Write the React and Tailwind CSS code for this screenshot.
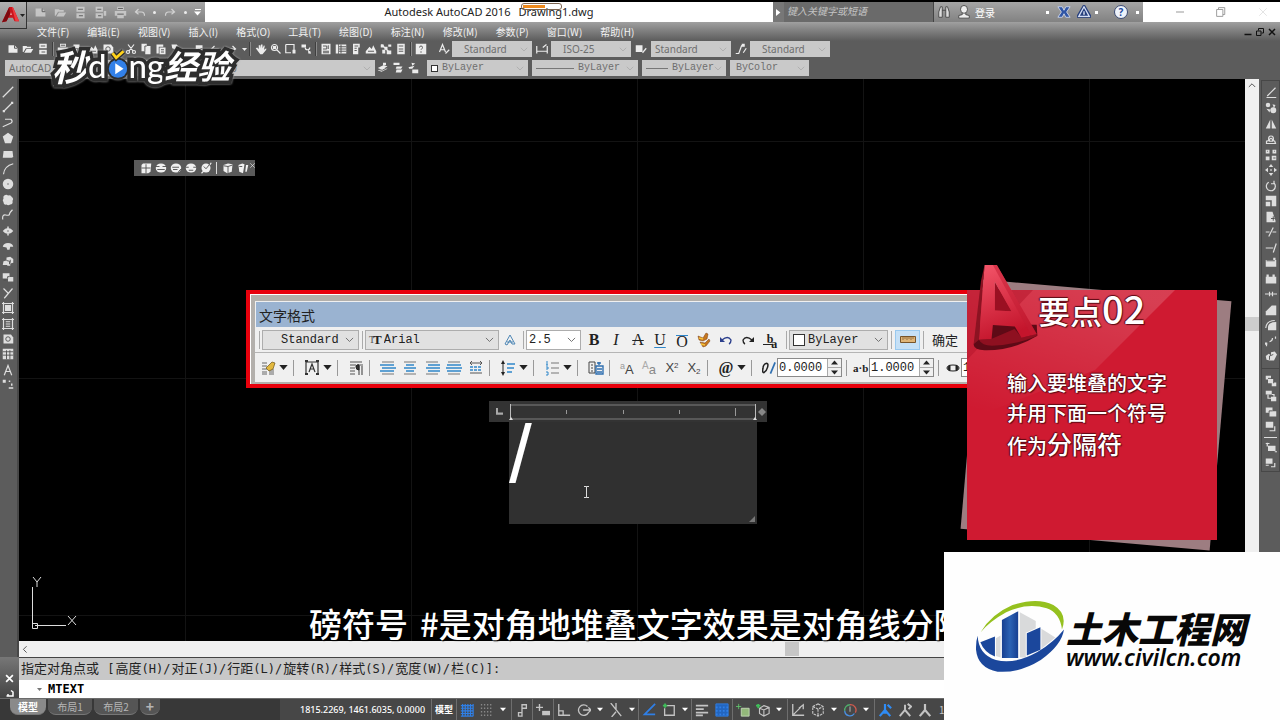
import { useState } from "react";
import clsx from "clsx";

// l = light strokes, f = light fill, d = dark detail
const shapes = {
  newFile: { f: "M2 3h8l4 4v6H2z", d: "M10 3v4h4" },
  open: { f: "M1 4h5l1 1h5v2H5l-3 5H1zM6 8h9l-3 5H3z" },
  save: { f: "M3 1h10v6H3zM3 9h10v6H3z", d: "M5 4h6M6 12h5" },
  saveAs: { f: "M2 1h9v6H2zM2 9h9v6H2zM12 6h3v6h-3z", d: "M4 4h5M5 12h4" },
  print: { f: "M4 1h8v4H4zM1 6h14v6h-3v3H4v-3H1z", d: "M4 10h8M5 3h6" },
  undo: { l: "M6 4 2 8l4 3M3 8h7q4 0 4 5" },
  redo: { l: "M10 4l4 4-4 3M13 8H6q-4 0-4 5" },
  preview: { f: "M2 2h8v5H2zM2 8h5v6H2z", l: "M9 10a2.5 2.5 0 1 0 5 0 2.5 2.5 0 1 0-5 0M13 12l2 3" },
  cut: { l: "M4 2l7 9M12 2 5 11M2 12a2 2 0 1 0 4 0 2 2 0 1 0-4 0M10 12a2 2 0 1 0 4 0 2 2 0 1 0-4 0" },
  copy: { f: "M2 1h7v10H2zM7 4h7v11H7z", d: "M6.500 11V4H9" },
  paste: { f: "M2 2h9v3H5v9H2zM6 6h8v9H6z", d: "M8 9h4M8 12h4" },
  match: { f: "M2 2h7l3 4-4 3-5-2zM9 10l3-2 3 5-2 2z" },
  hand: { f: "M1 7l2-1 2 2V3h2v4l1-5h2l0 5 2-4 1 1-1 5 3-2v2l-5 6H7z" },
  zoom: { l: "M2 6a4 4 0 1 0 8 0 4 4 0 1 0-8 0M9 9l5 5", f: "M4 4h4v4H4z" },
  zoomWin: { l: "M1 2h11v8M1 2v11h7", f: "M10 9h4v5h-4z" },
  zoomPrev: { f: "M2 2h6v4H2zM11 11h3v3h-3z", l: "M7 6a3 3 0 1 0 6 0M11 10l3 4" },
  props: { f: "M2 1h12v14H2z", d: "M4 4h5v4H4M11 3v5M4 11h8M4 13h8" },
  design: { f: "M1 2h3v12H1zM5 2h10v12H5z", d: "M8 2v12M5 5h10M5 8h10M5 11h10" },
  palette: { f: "M4 1h9v5h-2v9H4z", d: "M6 4h5M6 7h3M6 10h3" },
  sheet: { f: "M1 11l5-6 3 3 2-5 4 8v3H1z", d: "M4 11h8" },
  markup: { f: "M1 2h4v4H1zM6 5h4v4H6zM11 2h4v3h-4zM3 9h4v5H3zM9 10h6v5H9z", l: "M2 2l11 11" },
  calc: { f: "M3 1h10v14H3z", d: "M5 4h6M5 8h6M5 11h6" },
  help: { f: "M1 1h14v14H1z", d: "M6 6q0-2 2-2t2 2q0 1-2 3M8 11v2" },
  textStyle: { l: "M2 12 6 2l4 10M3 9h6M10 14l5-5" },
  dimStyle: { l: "M1 4v10M15 4v10M1 11h14M9 6l5-4" },
  tableStyle: { f: "M1 3h9v9H1z", l: "M10 13l5-6" },
  leaderStyle: { l: "M1 14h4L9 3M11 13l4-6", f: "M9 1h4v4H9z" },
  layer: { f: "M1 8l8-4 5 2-8 4zM1 11l8-4 5 2-8 4zM8 1h4v3H8z", d: "M2 10l5 1 6-3" },
  layerPrev: { f: "M2 1h8v3H2zM6 6h8l-2 3H5zM6 10h8l-2 4H5z" },
  layerState: { f: "M6 1l5 1-4 3zM2 7l8-2-3 4H3zM7 10h8v5H7z" },
  line: { l: "M1 15 15 1" },
  xline: { l: "M3 13 13 3", f: "M1 12h3v3H1zM12 1h3v3h-3z" },
  pline: { l: "M4 3h8q3 3 0 5L1 13" },
  polygon: { f: "M8 1l7 5-3 9H4L1 6z" },
  rect: { f: "M2 4h12l1 8-2 1H1l1-8z" },
  arc: { l: "M2 15Q3 4 15 1" },
  circle: { f: "M1 8a7 7 0 1 0 14 0 7 7 0 1 0-14 0", d: "M8 7v2" },
  cloud: { f: "M3 2q3-2 5 0 4-1 5 2 3 2 1 5 1 5-3 5-3 2-5 0-4 1-4-3-2-3 0-5-1-3 1-4" },
  spline: { l: "M1 14Q0 7 5 8t5-1 4-6" },
  ellipse: { f: "M1 8q3-4 7-4t7 4q-3 4-7 4T1 8M7 2h2v12H7z", d: "M7 8h2" },
  ellipseArc: { f: "M1 9q1-5 7-5t7 5l-4 0-1 4H7l-1-3z" },
  insert: { f: "M2 7l4-1V2l5-1 4 3v5l-4 1v3H7v-1H1z", d: "M6 6l4 1v4M11 5v4" },
  block: { f: "M1 3h9v7H1zM8 8h7v6H8z", d: "M7.500 10V7.500H10M2 12h4" },
  point: { l: "M2 2l6 6M14 2 3 15" },
  hatch: { f: "M4 4h8v8H4z", l: "M2 0v16M14 0v16M0 2h16M0 14h16" },
  gradient: { l: "M2 0v16M14 0v16M0 2h16M0 14h16M5 5h6M5 8h6M5 11h6" },
  region: { f: "M2 2h10l3 4v8H2z", d: "M5 8a3 3 0 1 0 6 0 3 3 0 1 0-6 0" },
  table: { f: "M1 1h14v14H1z", d: "M1 5h14M1 9.500h14M6 3v12M10.500 3v12" },
  mtext: { l: "M3 15 8 2l5 13M5 10h6M3 14h1M12 14h1" },
  addSel: { f: "M1 1h4v4H1zM9 2h2v2H9zM12 6h2v3h-2zM9 11h6v2H9z" },
  erase: { l: "M3 12 14 1M2 14h13" },
  copyObj: { f: "M1 4a3 3 0 1 0 6 0 3 3 0 1 0-6 0M2 9l4 5 1-4M7 11a4 4 0 1 0 8 0 4 4 0 1 0-8 0M10 3l4 1-2 4z" },
  mirror: { f: "M7 2v12H1zM9 2v12h6z" },
  offset: { l: "M2 14h12l-1-3-2-1q1-6-3-6T5 10l-3 1zM6 11q0-4 2-4t2 4z" },
  array: { f: "M1 1h5v5H1zM10 1h5v5h-5zM1 10h5v5H1zM9 9h6v6H9z", d: "M3 3h1M12 3h1M11 12h3" },
  move: { f: "M8 0l3 4H5zM8 16l3-4H5zM0 8l4-3v6zM16 8l-4-3v6zM7 7h2v2H7z" },
  rotate: { l: "M5 3a6 6 0 1 0 7 1M12 1v4H8" },
  scale: { f: "M1 1h14v14H9V7H1zM1 9h6v6H1z" },
  stretch: { f: "M2 1h8l4 12v2H2z", d: "M8 10h5M11 7v6" },
  trim: { l: "M1 8h5M10 8h5M5 14 11 2" },
  extend: { l: "M1 8h10M11 14l4-12" },
  breakPt: { f: "M1 4h14v9H1zM11 1h3v3h-3z", d: "M2 5h11" },
  breakAt: { f: "M1 5h14v9H1zM2 2h3v3H2zM10 2h3v3h-3z" },
  join: { l: "M0 8h5M11 8h5M6 5v6M10 5v6M6 8h4" },
  chamfer: { f: "M1 15V10L9 2h6v13z" },
  fillet: { f: "M4 15V10Q5 4 15 4v11z", l: "M1 12Q2 2 13 2" },
  blend: { l: "M2 11v4M6 9q4-1 4-5M14 2v3", f: "M0 10h3v3H0z" },
  explode: { f: "M1 8l4-3 3 2V3l5-1 3 4-2 4-2 4H6l-4-1z", d: "M6 13V8l5-2" },
  front: { f: "M1 1h7v5H1zM4 5h8v6H4zM9 10h6v5H9z", d: "M4 4.500h7.500V11" },
  back: { f: "M1 1h8v5H1zM8 9h7v6H8z", l: "M4 6v5h4M9 6h3v3" },
  above: { f: "M1 2h9v7H1zM6 7h9v7H6z", d: "M5.500 9V6.500H10" },
  under: { f: "M1 1h10v8H1z", l: "M13 7v6H6" },
  textFront: { f: "M4 5h10v7H4z", l: "M1 2h5M3 1v5M13 13h3" },
  hatchBack: { f: "M1 2h9v7H1z", l: "M13 8v5H8M1 11h4" },
  cube: { f: "M2 4l2-2h11l-1 11-3 2H2z", d: "M2 8h12M8 3v12" },
  sphere: { f: "M1 8a7 6 0 1 0 14 0 7 6 0 1 0-14 0", d: "M1 6h5M10 6h5M3 10h10" },
  sphereCut: { f: "M1 8a7 6 0 1 0 14 0 7 6 0 1 0-14 0", d: "M3 7h9M4 10h6M11 13l4-4" },
  sphereSlice: { f: "M1 8a7 6 0 1 0 14 0 7 6 0 1 0-14 0", d: "M1 7h4M11 7h4M5 11h6" },
  sphereLine: { f: "M2 8a6 6 0 1 0 12 0 6 6 0 1 0-12 0", d: "M5 6l3 3 5-6", l: "M2 15l3-3M13 4l2-3" },
  box: { f: "M2 4l6-2 6 1-1 10-6 2-5-3z", d: "M2 5l6 1 6-2M8 6v9" },
  boxCut: { f: "M2 4l5-2 3 1-2 12-5-2zM12 4h3l-2 9h-2z", d: "M3 6h4" },
};

const Glyph = ({ name, className = "size-3" }) => {
  const s = shapes[name];
  return (
    <svg viewBox="0 0 16 16" className={clsx("shrink-0", className)} aria-hidden="true">
      {s.f && <path d={s.f} fill="currentColor" />}
      {s.l && <path d={s.l} fill="none" stroke="currentColor" strokeWidth="1.600" />}
      {s.d && <path d={s.d} fill="none" stroke="#4f4f4f" strokeWidth="1.200" />}
    </svg>
  );
};

const Svg = ({ children, className = "size-4" }) => (
  <svg viewBox="0 0 16 16" className={clsx("shrink-0", className)} fill="none" stroke="currentColor" aria-hidden="true">
    {children}
  </svg>
);

const Chevron = ({ className }) => (
  <svg viewBox="0 0 10 6" className={clsx("shrink-0", className)} fill="none" stroke="currentColor" aria-hidden="true">
    <path d="M1 1l4 4 4-4" />
  </svg>
);

const Caret = ({ className = "w-[9px]" }) => (
  <svg viewBox="0 0 10 6" className={clsx("h-[5px] shrink-0", className)} fill="currentColor" aria-hidden="true">
    <path d="M0 0h10L5 6z" />
  </svg>
);

const ToolGroup = ({ names, className }) => (
  <div className={clsx("flex", className)}>
    {names.map((n) => (
      <button key={n} type="button" aria-label={n} className="flex w-[15px] items-center justify-center">
        <Glyph name={n} />
      </button>
    ))}
  </div>
);

const BarSep = () => <span className="mx-0.5 h-3.5 w-px bg-[#3f3f3f] shadow-[1px_0_0_#8a8a8a]" />;

const BarCombo = ({ label, value, className, textClass, children }) => (
  <div className={clsx("flex h-4 shrink-0 items-center bg-[#c9c9c9] px-1 text-[#6e6e6e]", className)}>
    {children}
    <select aria-label={label} className={clsx("h-4 min-w-0 flex-1 appearance-none bg-transparent leading-4 outline-none", textClass)}>
      <option>{value}</option>
    </select>
    <Chevron className="w-2 text-[#aaa]" />
  </div>
);

const sansText = "font-['Noto_Sans',sans-serif] text-[10px]";
const monoText = "font-['Liberation_Mono',monospace] text-[10px]";

/* ---------- title bar ---------- */
const TitleBar = () => (
  <header className="relative flex h-5 shrink-0 bg-gradient-to-b from-[#a5a5a5] to-[#828282] text-[#d2d2d2]">
    <button
      type="button"
      aria-label="Application menu"
      className="absolute top-0 left-0 z-10 flex h-[27px] w-[27px] items-center border-r border-b border-[#333] bg-gradient-to-b from-[#b0b0b0] to-[#8b8b8b] text-[#222]"
    >
      <svg viewBox="0 0 20 20" className="ml-0.5 size-[18px]">
        <path d="M8 1h4l7 16h-5l-2-4-5 0-2 4-5 1z" fill="#c8161d" />
        <path d="M8 1 0 18l5-1 4-8z" fill="#7d0a10" />
        <path d="M10 7l1 3H9z" fill="#efb5b5" />
        <path d="M11 1h1l7 16h-4z" fill="#ef3a3f" />
      </svg>
      <Caret className="w-[5px]" />
    </button>
    <div className="flex w-[205px] shrink-0 items-center pl-[30px]">
      {["newFile", "open", "save", "saveAs", "print"].map((n) => (
        <button key={n} type="button" aria-label={n} className="flex w-5 justify-center">
          <Glyph name={n} className="size-[13px] opacity-80" />
        </button>
      ))}
      <button type="button" aria-label="undo" className="ml-1"><Glyph name="undo" /></button>
      <span className="ml-[7px] size-[3px] rounded-full bg-[#ececec]" />
      <button type="button" aria-label="redo" className="ml-2"><Glyph name="redo" /></button>
      <span className="ml-2 size-[3px] rounded-full bg-[#ececec]" />
      <button type="button" aria-label="Customize" className="ml-[7px] flex flex-col items-center gap-px text-white">
        <span className="h-px w-1.5 bg-white" />
        <Caret className="w-[7px]" />
      </button>
    </div>
    <div className="relative flex flex-1 items-center justify-center bg-white font-['Noto_Sans',sans-serif] text-[11px] text-[#222]">
      <h1 className="flex gap-2 whitespace-pre">
        <span>Autodesk AutoCAD 2016</span>
        <span>Drawing1.dwg</span>
      </h1>
      <div className="absolute top-px left-[316px] flex h-[7px] w-[41px] rounded-[3px] border border-[#7c6450] p-px">
        <span className="w-[22px] bg-[#ef8a1d]" />
      </div>
    </div>
    <button type="button" aria-label="Expand search" className="flex w-[11px] items-center justify-center bg-[#777]">
      <svg viewBox="0 0 5 8" className="h-[7px]"><path d="M0 0l5 4-5 4z" fill="#fff" /></svg>
    </button>
    <input
      aria-label="Search"
      placeholder="键入关键字或短语"
      className="w-[149px] bg-[#6a6a6a] px-[3px] pb-1 font-['Noto_Sans_CJK_SC',sans-serif] text-[10px] italic outline-none placeholder:text-[#c4c4c4]"
    />
    <div className="flex w-[210px] items-center border-l border-[#444] pl-[3px] text-white">
      <Svg className="size-[14px]"><path d="M2 14V8l2-6h2v12zM10 14V2h2l2 6v6zM6 6h4" fill="#ddd" stroke="#444" /></Svg>
      <Svg className="ml-1.5 size-[14px]">
        <path d="M4 5a4 4.500 0 1 0 8 0 4 4.500 0 1 0-8 0M6 9v2l-4 1v3h12v-3l-4-1V9" fill="#eee" stroke="#444" />
      </Svg>
      <a href="#login" className="ml-1 font-['Noto_Sans_CJK_SC',sans-serif] text-[10px]">登录</a>
      <span className="ml-[51px] size-[3px] bg-white" />
      <Svg className="ml-2 size-[14px]">
        <path d="M1 2h5l2 4 2-4h5l-4 6 4 6h-5l-2-4-2 4H1l4-6z" fill="#2f55a5" stroke="#cfd8ee" />
      </Svg>
      <Svg className="ml-1.5 size-[14px]">
        <path d="M8 1 1 13h14zM8 6l-4 6h8z" stroke="#263f7d" strokeWidth="3" />
        <path d="M8 2 2 13h12zM8 7v4" stroke="#d5def5" strokeWidth="1.500" />
      </Svg>
      <span className="ml-1 size-[3px] bg-white" />
      <span className="ml-4 flex size-[14px] items-center justify-center rounded-full border border-[#3c4b73] bg-[#eef3fb] font-['Noto_Sans',sans-serif] text-[10px] font-bold text-[#24499e]">?</span>
      <span className="ml-2 size-[3px] bg-white" />
    </div>
    <div className="flex w-[137px] items-center justify-between bg-white pr-3 pl-[33px] text-[#999]">
      <button type="button" aria-label="Minimize"><Svg className="size-2"><path d="M0 8h16" strokeWidth="2" /></Svg></button>
      <button type="button" aria-label="Restore"><Svg className="size-2.5"><path d="M1 4h10v11H1zM4 4V1h10v11h-3" strokeWidth="1.500" /></Svg></button>
      <button type="button" aria-label="Close" className="text-[#e2e2e2]"><Svg className="size-2.5"><path d="M2 2l12 12M14 2 2 14" strokeWidth="1.500" /></Svg></button>
    </div>
  </header>
);

const menus = ["文件(F)", "编辑(E)", "视图(V)", "插入(I)", "格式(O)", "工具(T)", "绘图(D)", "标注(N)", "修改(M)", "参数(P)", "窗口(W)", "帮助(H)"];

const MenuBar = () => (
  <nav className="flex h-[19px] shrink-0 items-center bg-gradient-to-b from-[#a0a0a0] to-[#5c5c5c] pr-1 pl-[37px] font-['Noto_Sans_CJK_SC',sans-serif] text-[10px] text-[#f2f2f2]">
    <div className="flex gap-[18px]">
      {menus.map((m) => (
        <button key={m} type="button">{m}</button>
      ))}
    </div>
    <div className="ml-auto flex gap-1 text-[#111]">
      <Svg className="size-2"><path d="M1 13h14" strokeWidth="3" /></Svg>
      <Svg className="size-2"><path d="M1 6h9v9H1zM5 5V1h10v9h-4" strokeWidth="2" /></Svg>
      <Svg className="size-2"><path d="M2 2l12 12M14 2 2 14" strokeWidth="3" /></Svg>
    </div>
  </nav>
);

const Toolbars = () => (
  <div className="shrink-0 bg-[#5c5c5c] text-[#ececec]">
    <div className="flex h-[18px] items-start pl-[5px]">
      <div className="flex h-4 w-[430px] shrink-0 items-center">
        <ToolGroup names={["newFile", "open", "save"]} />
        <BarSep />
        <ToolGroup names={["print", "preview", "sheet", "region"]} />
        <ToolGroup names={["cut", "copy", "paste", "match"]} className="ml-2" />
        <ToolGroup names={["block", "undo", "redo"]} className="ml-2.5" />
        <Caret className="ml-1 w-[5px]" />
        <BarSep />
        <ToolGroup names={["hand", "zoom", "zoomWin", "zoomPrev"]} className="ml-px" />
        <BarSep />
        <ToolGroup names={["props", "design", "palette", "sheet", "markup", "calc"]} />
        <BarSep />
        <ToolGroup names={["help"]} />
      </div>
      <div className="flex h-4 items-center">
        <div className="flex w-[17px] justify-center"><Glyph name="textStyle" /></div>
        <BarCombo label="Text style" value="Standard" className="w-20 pl-3" textClass={sansText} />
        <div className="flex w-[19px] justify-center"><Glyph name="dimStyle" /></div>
        <BarCombo label="Dimension style" value="ISO-25" className="w-20 pl-3" textClass={sansText} />
        <div className="flex w-5 justify-center"><Glyph name="tableStyle" /></div>
        <BarCombo label="Table style" value="Standard" className="w-20" textClass={sansText} />
        <div className="flex w-[19px] justify-center"><Glyph name="leaderStyle" /></div>
        <BarCombo label="Leader style" value="Standard" className="w-20 pl-3" textClass={sansText} />
      </div>
    </div>
    <div className="flex h-5 items-start pt-px pl-[5px]">
      <BarCombo label="Workspace" value="AutoCAD 经典" className="w-[190px]" textClass={sansText} />
      <BarCombo label="Layer" value="0" className="w-[180px] pl-9" textClass={sansText} />
      <div className="flex h-4 items-center">
        <ToolGroup names={["layer", "layerPrev", "layerState"]} />
      </div>
      <BarCombo label="Colour" value="ByLayer" className="ml-[7px] w-[101px]" textClass={monoText}>
        <span className="mr-1 size-[7px] border border-[#333] bg-white" />
      </BarCombo>
      <BarCombo label="Linetype" value="ByLayer" className="ml-1 w-[106px]" textClass={monoText}>
        <span className="mr-1 h-px w-[38px] bg-[#777]" />
      </BarCombo>
      <BarCombo label="Lineweight" value="ByLayer" className="ml-1 w-[84px]" textClass={monoText}>
        <span className="mr-1 h-px w-[22px] bg-[#777]" />
      </BarCombo>
      <BarCombo label="Plot style" value="ByColor" className="ml-1 w-[79px] pl-1.5" textClass={monoText} />
    </div>
  </div>
);

const drawTools = ["line", "xline", "pline", "polygon", "rect", "arc", "circle", "cloud", "spline", "ellipse", "ellipseArc", "insert", "block", "point", "hatch", "gradient", "region", "table", "mtext", "addSel"];
const modifyTools = ["erase", "copyObj", "mirror", "offset", "array", "move", "rotate", "scale", "stretch", "trim", "extend", "breakPt", "breakAt", "join", "chamfer", "fillet", "blend", "explode"];

const ToolColumn = ({ names, className }) => (
  <div className={clsx("flex flex-col", className)}>
    {names.map((n) => (
      <button key={n} type="button" aria-label={n} className="flex flex-1 items-center justify-center">
        <Glyph name={n} />
      </button>
    ))}
  </div>
);

/* ---------- text formatting dialog ---------- */
const Grip = ({ className }) => <span className={clsx("h-[18px] w-px shrink-0 bg-[#aaa]", className)} />;
const Sep = ({ tight }) => (
  <span className={clsx("h-4 w-px shrink-0 bg-[#999]", tight ? "mr-1.5 ml-1" : "mr-2.5 ml-[5px]")} />
);

const FormatCombo = ({ label, value, className, children }) => (
  <div className={clsx("flex h-5 shrink-0 items-center border border-[#adadad] pr-1 text-xs", className)}>
    {children}
    <select aria-label={label} className="min-w-0 flex-1 appearance-none bg-transparent font-['Liberation_Mono',monospace] outline-none">
      <option>{value}</option>
    </select>
    <Chevron className="w-[9px] text-[#666]" />
  </div>
);

const FormatButton = ({ label, children, className }) => (
  <button type="button" aria-label={label} className={clsx("flex w-[22px] shrink-0 justify-center font-['Liberation_Serif',serif] text-base leading-5", className)}>
    {children}
  </button>
);

const MenuButton = ({ label, children }) => (
  <button type="button" aria-label={label} className="flex w-7 shrink-0 items-center gap-[3px]">
    {children}
    <Caret />
  </button>
);

// lines of a paragraph; the inner ones are blue
const AlignIcon = ({ inner }) => (
  <Svg>
    <path d="M2 2h12M2 14h12" stroke="#777" />
    <path d={inner} stroke="#2f86c9" strokeWidth="1.500" />
  </Svg>
);

const NumberField = ({ label, value, onChange, className }) => (
  <div className={clsx("flex h-[19px] shrink-0 items-stretch border border-[#8a8a8a] bg-white", className)}>
    <input
      aria-label={label}
      value={value}
      onChange={(e) => onChange(e.target.value)}
      className="w-0 flex-1 pl-px font-['Liberation_Mono',monospace] text-xs outline-none"
    />
    <div className="flex w-[14px] flex-col items-center justify-around border-l border-[#aaa] bg-[#f0f0f0]">
      <button type="button" aria-label="Increase"><Caret className="w-[7px] rotate-180" /></button>
      <span className="h-px w-full bg-[#aaa]" />
      <button type="button" aria-label="Decrease"><Caret className="w-[7px]" /></button>
    </div>
  </div>
);

const FormatDialog = () => {
  const [oblique, setOblique] = useState("0.0000");
  const [tracking, setTracking] = useState("1.0000");
  const [widthFactor, setWidthFactor] = useState("1.0000");

  return (
    <section className="absolute top-[211px] left-[227px] w-[790px] border-4 border-[#e8000c] bg-[#f0f0f0] text-[#222]">
      <div className="border-t border-l border-white">
        <div className="border-t-[6px] border-b-2 border-l-4 border-[#b3b0ac]">
          <h2 className="mt-px ml-px flex h-[25px] items-center bg-[#9ab3d1] pl-[3px] font-['Noto_Sans_CJK_SC',sans-serif] text-sm">文字格式</h2>
          <div className="flex h-[26px] items-center border-b border-[#b5b5b5] pl-1">
            <Grip />
            <FormatCombo label="Style" value="Standard" className="ml-0.5 w-[97px] bg-[#e1e1e1] pl-[18px]" />
            <Grip className="ml-[3px]" />
            <FormatCombo label="Font" value="Arial" className="ml-0.5 w-[134px] bg-[#e1e1e1] pl-[3px]">
              <span className="mr-0.5 flex font-['Liberation_Serif',serif] text-[13px] leading-3"><span className="text-[10px] text-[#555]">T</span><b className="-ml-0.5">T</b></span>
            </FormatCombo>
            <Svg className="ml-[3px] size-4"><path d="M3 12 8 3l5 9h-3L8 8l-3 5zM5 10h6" stroke="#4d86b5" /></Svg>
            <Grip className="ml-[5px]" />
            <FormatCombo label="Text height" value="2.5" className="mr-0.5 ml-0.5 w-[55px] bg-white pl-0.5" />
            <FormatButton label="Bold"><b>B</b></FormatButton>
            <FormatButton label="Italic"><i>I</i></FormatButton>
            <FormatButton label="Strikethrough"><span className="line-through">A</span></FormatButton>
            <FormatButton label="Underline"><span className="underline decoration-[#2f86c9] underline-offset-2">U</span></FormatButton>
            <FormatButton label="Overline"><span className="mt-1 border-t border-[#2f86c9] leading-3">O</span></FormatButton>
            <FormatButton label="Match formatting">
              <Svg>
                <path d="M2 4l5 2 3-5 2 1-1 5-4 2-4-1zM4 10l5 1 4-4 1 2-4 5-3 1z" fill="#c4761f" stroke="#7a3f12" strokeWidth=".500" />
                <path d="M3 6l4 1M5 12l4 1" stroke="#f3c23a" strokeWidth="1.500" />
              </Svg>
            </FormatButton>
            <FormatButton label="Undo">
              <Svg><path d="M4 8q6-5 9 0 0 3-2 4" stroke="#2b3f8c" strokeWidth="1.400" /><path d="M2 5v5h5z" fill="#2b3f8c" stroke="none" /></Svg>
            </FormatButton>
            <FormatButton label="Redo">
              <Svg><path d="M12 8q-6-5-9 0 0 3 2 4" stroke="#222" strokeWidth="1.400" /><path d="M14 5v5H9z" fill="#222" stroke="none" /></Svg>
            </FormatButton>
            <FormatButton label="Stack">
              <span className="flex items-center text-xs leading-3 font-bold"><span className="border-b border-[#222] pl-1 leading-[9px]">b</span><span className="mt-2.5 -ml-0.5 leading-[9px]">a</span></span>
            </FormatButton>
            <Grip className="ml-[5px]" />
            <FormatCombo label="Text colour" value="ByLayer" className="ml-0.5 w-[99px] bg-[#e1e1e1] pl-[3px]">
              <span className="mr-[3px] size-3 border border-[#333] bg-white" />
            </FormatCombo>
            <Grip className="ml-[3px]" />
            <button type="button" aria-label="Ruler" className="ml-[3px] flex h-5 w-[25px] items-center justify-center border border-[#99c9ef] bg-[#c5e0f6]">
              <svg viewBox="0 0 16 7" className="w-4"><path d="M.5.5h15v6H.5z" fill="#dfb578" stroke="#77552b" /><path d="M3 1v3M5 1v2M7 1v3M9 1v2M11 1v3M13 1v2" stroke="#77552b" strokeWidth=".700" /></svg>
            </button>
            <Grip className="ml-[3px]" />
            <button type="button" className="ml-2 shrink-0 font-['Noto_Sans_CJK_SC',sans-serif] text-[13px] leading-4">确定</button>
          </div>
          <div className="flex h-[29px] items-center pl-[5px]">
            <MenuButton label="Columns">
              <Svg><path d="M2 3h5M2 6h5M2 9h5M2 12h5M2 14h5M9 12h5M9 14h5M9 10h5" stroke="#666" /><path d="M6 8l6-6 3 1-2 6-4 2z" fill="#e3b93f" stroke="#6d5516" strokeWidth=".700" /></Svg>
            </MenuButton>
            <Sep />
            <MenuButton label="MText justification">
              <Svg><path d="M2 2h12M2 1v13M14 1v13M5 12l3-8 3 8M6 9h4" stroke="#333" strokeWidth="1.200" /><path d="M1 1h3M12 1h3M1 14h3M12 14h3" stroke="#333" strokeWidth="2" /></Svg>
            </MenuButton>
            <Sep />
            <button type="button" aria-label="Paragraph">
              <Svg><path d="M2 2h12M2 5h6M2 8h5M2 11h5M2 14h5M11 6v9M14 6v9M10 5h5" stroke="#555" strokeWidth="1.200" /><path d="M8 7a2 2 0 0 1 3-2v5q-3 0-3-3" fill="#333" /></Svg>
            </button>
            <Sep />
            <div className="flex shrink-0 gap-1.5">
              <button type="button" aria-label="Left"><AlignIcon inner="M0 5h14M2 8h14M0 11h14" /></button>
              <button type="button" aria-label="Center"><AlignIcon inner="M4 5h8M2 8h12M4 11h8" /></button>
              <button type="button" aria-label="Right"><AlignIcon inner="M4 5h12M2 8h14M4 11h12" /></button>
              <button type="button" aria-label="Justify"><AlignIcon inner="M1 5h14M0 8h16M1 11h14" /></button>
              <button type="button" aria-label="Distribute">
                <Svg><path d="M2 3h12M4 1 2 3l2 2M12 1l2 2-2 2M2 13h12" stroke="#555" /><path d="M2 7h12M2 10h12" stroke="#2f86c9" strokeWidth="1.500" strokeDasharray="3 1" /></Svg>
              </button>
            </div>
            <Sep />
            <MenuButton label="Line spacing">
              <Svg><path d="M3 3v10" stroke="#222" /><path d="M3 0l2 4H1zM3 16l2-4H1z" fill="#222" stroke="none" /><path d="M7 4h8M7 8h7M7 12h5" stroke="#2f86c9" strokeWidth="1.500" /></Svg>
            </MenuButton>
            <Sep />
            <MenuButton label="Numbering">
              <Svg><path d="M3 1v4M2 5h2M2 7h2v2H2M2 12h2v3H2" stroke="#2f86c9" /><path d="M7 3h8M7 8h8M7 13h8" stroke="#777" /></Svg>
            </MenuButton>
            <Sep />
            <button type="button" aria-label="Insert field">
              <Svg><path d="M1 2h6v11H1zM3 5h2M3 8h2M3 11h2" stroke="#444" /><path d="M8 6h7v8H8zM9 9h5M9 12h5M11 2v3M9 3h4" stroke="#2f6fb0" strokeWidth="1.400" /></Svg>
            </button>
            <Sep />
            <div className="flex shrink-0 gap-1.5 font-['Liberation_Sans',sans-serif] text-[13px] leading-4 text-[#444]">
              <button type="button" aria-label="Uppercase" className="flex w-4 items-end"><span className="mb-1 text-[9px] text-[#999]">a</span>A</button>
              <button type="button" aria-label="Lowercase" className="flex w-4 items-end text-[#888]"><span className="mb-1 text-[10px] text-[#aaa]">A</span>a</button>
              <button type="button" aria-label="Superscript" className="w-4">X<sup className="text-[8px]">2</sup></button>
              <button type="button" aria-label="Subscript" className="w-4">X<sub className="text-[8px]">2</sub></button>
            </div>
            <Sep />
            <MenuButton label="Symbol"><span className="w-4 font-['Liberation_Serif',serif] text-base leading-4 font-bold">@</span></MenuButton>
            <Sep />
            <Svg className="h-4 w-[15px]"><path d="M1 9q0-5 4-6 2 0 1 4t-4 6q-2 0-1-4" strokeWidth="1.600" /><path d="M9 14 14 2" stroke="#2f6fb0" strokeWidth="1.800" /></Svg>
            <NumberField label="Oblique angle" value={oblique} onChange={setOblique} className="w-[65px]" />
            <Sep tight />
            <span className="w-4 shrink-0 font-['Liberation_Serif',serif] text-[11px] leading-4 font-bold whitespace-nowrap">a·b</span>
            <NumberField label="Tracking" value={tracking} onChange={setTracking} className="w-[65px]" />
            <Sep tight />
            <Svg><path d="M2 8q0-3 6-3t6 3-6 3-6-3" strokeWidth="1" /><path d="M3 8q0-2 2-3v6q-2-1-2-3M13 8q0-2-2-3v6q2-1 2-3" fill="#222" /></Svg>
            <NumberField label="Width factor" value={widthFactor} onChange={setWidthFactor} className="w-16" />
          </div>
        </div>
      </div>
    </section>
  );
};

const TextEditor = () => (
  <div className="absolute top-[322px] left-[470px] w-[278px]">
    <div className="flex h-[21px] items-center bg-[#333] text-[#aaa]">
      <div className="flex w-5 justify-center">
        <svg viewBox="0 0 8 8" className="size-[7px]"><path d="M1 0v6.500h7" fill="none" stroke="currentColor" strokeWidth="2.500" /></svg>
      </div>
      <svg viewBox="0 0 248 18" className="h-[18px] flex-1" preserveAspectRatio="none">
        <path d="M1 2h246M1 16h246" stroke="#666" strokeWidth="1.500" />
        <path d="M1.500 1v16M246.500 1v16" stroke="#bbb" />
        <path d="M57.500 7v4M114.500 7v4M170.500 7v4M226.500 5v8" stroke="#999" />
        <path d="M0 17l2-3 2 3zM244 17l2-3 2 3z" fill="#ddd" />
      </svg>
      <svg viewBox="0 0 10 10" className="mx-px size-2"><path d="M5 0l5 5-5 5-5-5z" fill="#888" /></svg>
    </div>
    <div className="relative mr-[10px] ml-5">
      <textarea
        aria-label="Multiline text"
        defaultValue="/"
        className="block h-[102px] w-full resize-none overflow-hidden bg-[#303030] font-['Liberation_Sans',sans-serif] text-[82px] leading-[64px] text-white outline-none"
      />
      <svg viewBox="0 0 8 8" className="absolute right-0.5 bottom-0.5 size-1.5"><path d="M8 0v8H0z" fill="#777" /></svg>
      <svg viewBox="0 0 7 12" className="absolute top-[64px] left-[74px] h-3 w-[7px]"><path d="M1 .5h2.500v11H1M6 .5H3.500M6 11.500H3.500" fill="none" stroke="#ddd" /></svg>
    </div>
  </div>
);

const noteText = "[text-shadow:1px_1px_1px_#5b0a14,-1px_0_1px_#5b0a14,0_-1px_1px_#5b0a14]";

const Note = () => (
  <aside className="absolute top-[211px] left-[948px] size-[250px] font-['Noto_Sans_CJK_SC',sans-serif] font-medium text-white">
    <div className="absolute inset-y-0 -right-1 left-1 rotate-[5deg] bg-[#9d7d81]" />
    <div className="absolute inset-0 bg-[#cf1a31]" />
    <svg viewBox="0 0 250 250" className="absolute inset-0">
      <defs>
        <linearGradient id="sheen" x1=".700" y1="0" x2=".200" y2="1">
          <stop offset="0" stopColor="#fff" stopOpacity=".160" />
          <stop offset="1" stopColor="#fff" stopOpacity="0" />
        </linearGradient>
      </defs>
      <path d="M0 0h208L128 80 0 130z" fill="url(#sheen)" />
      <path d="M0 0h66L0 70z" fill="#b3142a" opacity=".500" />
    </svg>
    <svg viewBox="98 42 200 262" className="absolute -top-[26px] left-[5px] h-[87px] w-[67px]">
      <defs>
        <linearGradient id="face" x1="0" y1="0" x2=".300" y2="1">
          <stop offset="0" stopColor="#f4566a" />
          <stop offset="1" stopColor="#c4152c" />
        </linearGradient>
      </defs>
      <path d="M118 225 292 225 294 258Q220 304 135 302 104 300 102 285z" fill="#5e0a16" />
      <path d="M118 270l37-2 70-30 22 25 45-10v6q-60 26-135 29-30 0-39-18z" fill="#8e1020" />
      <path d="M135 45l-17 225-16 14 22-190z" fill="#8c1322" />
      <path d="M166 96l50 88-50-2z" fill="#9a1022" />
      <path d="M135 45h37l120 208-46 11-20-34-66-4-4 42-38 2zM166 96v86l50 2z" fill="url(#face)" fillRule="evenodd" />
      <path d="M172 45l120 208-16 4L160 45z" fill="#c21b32" opacity=".500" />
    </svg>
    <div className={clsx("relative pl-[71px] text-[32px] leading-9", noteText)}>
      要点<span className="text-[38px] leading-9">02</span>
    </div>
    <p className={clsx("relative mt-10 pl-10 text-xl leading-[30px] whitespace-nowrap", noteText)}>
      输入要堆叠的文字<br />
      并用下面一个符号<br />
      作为<span className="text-[25px]">分隔符</span>
    </p>
  </aside>
);

const Canvas = () => (
  <main className="relative z-10 min-w-0 flex-1 bg-black bg-[linear-gradient(to_right,#131313_1px,transparent_1px),linear-gradient(#131313_1px,transparent_1px)] bg-[size:226px_237px] bg-[position:166px_62px]">
    <div className="absolute top-[81px] left-[115px] flex h-4 w-[121px] items-center bg-[#5a5a5a] pl-1 text-[#f0f0f0]">
      <ToolGroup names={["cube", "sphere", "sphereCut", "sphereSlice", "sphereLine"]} className="shrink-0" />
      <span className="mx-[3px] h-3 w-px shrink-0 bg-[#ddd]" />
      <ToolGroup names={["box", "boxCut"]} className="shrink-0" />
      <button type="button" aria-label="Close" className="mb-1.5"><Svg className="size-[5px]"><path d="M1 1l14 14M15 1 1 15" strokeWidth="2" /></Svg></button>
    </div>

    <svg viewBox="0 0 50 54" className="absolute bottom-2.5 left-2.5 h-[54px] w-[50px]" fill="none" stroke="#ddd">
      <path d="M3.500 46.500h5v5h-5zM3.500 48V10M6 48.500H37" />
      <path d="M4 0l4 5 4-5M8 5v5M39 39l8 9M47 39l-8 9" />
    </svg>

    <FormatDialog />
    <TextEditor />
    <Note />
    <p className="absolute bottom-0 left-[290px] z-10 flex gap-3 font-['Noto_Sans_CJK_SC',sans-serif] text-[33px] leading-9 font-medium whitespace-nowrap text-white [text-shadow:1px_1px_1px_#000]">
      <span>磅符号</span>
      <span>#是对角地堆叠文字效果是对角线分隔</span>
    </p>
  </main>
);

const options = ["高度(H)", "对正(J)", "行距(L)", "旋转(R)", "样式(S)", "宽度(W)", "栏(C)"];

const CommandLine = () => (
  <div className="flex h-[41px] shrink-0 bg-[#5c5c5c] font-['DejaVu_Sans_Mono','Noto_Sans_CJK_SC',monospace] text-xs">
    <div className="flex w-[19px] shrink-0 flex-col items-center justify-end gap-1.5 bg-gradient-to-b from-[#777] to-[#444] pb-px text-white">
      <Svg className="size-[9px]"><path d="M2 2l12 12M14 2 2 14" strokeWidth="3" /></Svg>
      <Svg className="size-2"><path d="M1 14h13V6l-4-3M4 14v-4" strokeWidth="3" /></Svg>
    </div>
    <div className="min-w-0 flex-1">
      <div className="flex h-[23px] items-center gap-px border-t border-[#444] bg-[#c8c8c8] pl-0.5 whitespace-pre text-[#222]">
        <span className="text-[13px]">指定对角点或</span>
        <span> [</span>
        {options.map((o, i) => (
          <span key={o}>
            <span className="text-[13px]">{o.slice(0, -3)}</span>
            {o.slice(-3)}
            {i < options.length - 1 ? "/" : "]:"}
          </span>
        ))}
      </div>
      <div className="flex h-[18px] items-center bg-white pl-[18px] text-[#777]">
        <Caret className="w-[5px]" />
        <input aria-label="Command" defaultValue="MTEXT" className="ml-1.5 flex-1 text-xs font-bold text-black outline-none" />
      </div>
    </div>
  </div>
);

/* ---------- status bar ---------- */
const StatusIcon = ({ children, label, className }) => (
  <button type="button" aria-label={label} className={clsx("flex w-5 shrink-0 justify-center", className)}>
    <Svg className="size-[14px]">{children}</Svg>
  </button>
);
const StatusCaret = () => <span className="flex w-3 shrink-0 justify-center text-white"><Caret className="w-[6px]" /></span>;
const StatusSep = () => <span className="h-full w-px shrink-0 bg-[#6e6e6e]" />;

const StatusBar = () => {
  const [tab, setTab] = useState("模型");

  return (
    <footer className="flex h-[22px] shrink-0 items-center border-t border-[#6b6b6b] bg-[#474747] font-['Noto_Sans_CJK_SC',sans-serif] text-[#c4c4c4]">
      <div className="flex h-full w-[280px] shrink-0 items-start bg-[#383838] pl-2.5 text-[10px] leading-[15px]">
        {["模型", "布局1", "布局2", "+"].map((t) => (
          <button
            key={t}
            type="button"
            onClick={() => setTab(t)}
            className={clsx(
              "mr-0.5 rounded-b-lg border-b border-[#777]",
              t === "模型" ? "w-9" : t === "+" ? "w-5 text-sm leading-[15px] font-bold" : "w-11",
              t === tab ? "bg-[#8a8a8a] font-bold text-white" : "bg-[#555] text-[#b5b5b5]"
            )}
          >
            {t}
          </button>
        ))}
      </div>
      <span className="w-[151px] shrink-0 pl-5 font-['Noto_Sans',sans-serif] text-[9px] font-medium whitespace-nowrap text-white">
        1815.2269, 1461.6035, 0.0000
      </span>
      <StatusSep />
      <button type="button" className="w-6 shrink-0 text-[9px] font-bold text-white">模型</button>
      <StatusSep />
      <StatusIcon label="Grid" className="text-[#2f7fe6]"><path d="M3 1v14M6 1v14M9 1v14M12 1v14M15 1v14M1 3h14M1 6h14M1 9h14M1 12h14M1 15h14" strokeWidth="1.400" /></StatusIcon>
      <StatusIcon label="Snap" className="text-[#888]"><path d="M1 2h14M1 6h14M1 10h14M1 14h14" strokeWidth="1.500" strokeDasharray="1.500 2" /></StatusIcon>
      <StatusCaret />
      <span className="w-0.5" /><StatusSep />
      <StatusIcon label="Infer"><path d="M8 13V2h5v4H8M4 11h4v4H4z" strokeWidth="1.500" /></StatusIcon>
      <StatusSep />
      <StatusIcon label="Dynamic input"><path d="M4 1v8M0 5h8" strokeWidth="1.600" /><path d="M7 9h9v5H7z" fill="currentColor" stroke="none" /></StatusIcon>
      <StatusSep />
      <StatusIcon label="Ortho"><path d="M2 1v13h13M2 9h5v5" strokeWidth="1.500" /></StatusIcon>
      <StatusIcon label="Polar"><path d="M12 4a6 6 0 1 0 1 7M7 8h9M13 5l3 3-3 3" strokeWidth="1.500" /></StatusIcon>
      <StatusCaret />
      <StatusIcon label="Isodraft"><path d="M2 0l12 15M8 0v8M8 10l-5 6" strokeWidth="1.500" /></StatusIcon>
      <StatusCaret />
      <StatusSep />
      <StatusIcon label="Tracking" className="text-[#2f7fe6]"><path d="M15 1 3 13h12" strokeWidth="2" /></StatusIcon>
      <StatusIcon label="Object snap"><path d="M5 3h9v11H3V6" strokeWidth="1.500" /><path d="M1 3h5M3.500.5v5" stroke="#3fc05a" strokeWidth="2" /></StatusIcon>
      <StatusCaret />
      <StatusSep />
      <StatusIcon label="Lineweight"><path d="M1 3h14M1 7h9M1 11h14M1 14h8" strokeWidth="2" /></StatusIcon>
      <StatusIcon label="Transparency" className="text-[#2f7fe6]"><path d="M1 1h14v14H1z" fill="#2365bd" /><path d="M1 5h14M1 9h14M1 13h14" strokeDasharray="2 2" strokeWidth="2" /></StatusIcon>
      <StatusSep />
      <StatusIcon label="Cycling"><path d="M3 1v6M0 4h6" stroke="#5fc06a" /><path d="M6 6h9v9H6z" fill="#93b87a" stroke="#c6d9b8" /></StatusIcon>
      <StatusIcon label="3D snap"><path d="M9 3l6 2v7l-6 3-5-3V6zM4 6l5 2 6-3M9 8v7" strokeWidth="1.300" /><path d="M0 3h5M2.500 1v5" stroke="#3fc05a" strokeWidth="2" /></StatusIcon>
      <StatusCaret />
      <span className="w-0.5" /><StatusSep />
      <StatusIcon label="UCS"><path d="M2 1v13h13M3 13l8-8M9 6l5-4v5" strokeWidth="1.500" /></StatusIcon>
      <StatusIcon label="Filter"><path d="M8 1l6 3v8l-6 3-6-3V4zM2 4l6 3 6-3M8 7v8" strokeWidth="1.300" strokeDasharray="3 1" /></StatusIcon>
      <StatusCaret />
      <StatusIcon label="Gizmo"><path d="M8 2a6 6 0 0 0-6 7" stroke="#4fae6b" strokeWidth="1.500" /><path d="M2 9a6 6 0 0 0 11 3" stroke="#4a8fe0" strokeWidth="1.500" /><path d="M14 11A6 6 0 0 0 8 2" stroke="#d05a4e" strokeWidth="1.500" /><path d="M8 4v6" /></StatusIcon>
      <StatusCaret />
      <span className="w-0.5" /><StatusSep />
      <StatusIcon label="Annotation visibility" className="text-[#2f8cf5]"><path d="M8 1v7L2 15M8 8l6 7M5 11h6M11 2l4 4" strokeWidth="2.500" /></StatusIcon>
      <StatusIcon label="Auto scale"><path d="M8 2v6l-6 7M8 8l6 7M11 1l4 3-3 3" strokeWidth="2.200" /></StatusIcon>
      <StatusIcon label="Annotation scale"><path d="M8 1v7L2 15M8 8l6 7" strokeWidth="2.500" /></StatusIcon>
      <span className="pl-1 text-[10px]">1</span>
    </footer>
  );
};

const MiaodongMark = () => (
  <div className="absolute top-[42px] left-[52px] z-20 flex items-center font-['Noto_Sans_CJK_SC',sans-serif] text-[33px] leading-[46px] font-bold text-white [-webkit-text-stroke:7px_#2d2d2d] [paint-order:stroke_fill] drop-shadow-[0_0_1px_#aaa]">
    <span className="text-4xl leading-[46px] italic">秒</span>
    <span className="font-['Lato',sans-serif] font-medium">d</span>
    <svg viewBox="0 0 24 40" className="h-10 w-[22px]">
      <circle cx="12" cy="24" r="12" fill="#2d2d2d" />
      <circle cx="12" cy="24" r="10" fill="#3280e8" />
      <path d="M9 18l9 6-9 6z" fill="#fff" />
      <path d="M6 7l4 5 8-7" fill="none" stroke="#2d2d2d" strokeWidth="6" />
      <path d="M6 7l4 5 8-7" fill="none" stroke="#ffd21c" strokeWidth="3" />
    </svg>
    <span className="font-['Lato',sans-serif] font-medium">ng</span>
    <span className="italic">经验</span>
  </div>
);

const CivilLogo = () => (
  <div className="absolute right-0 bottom-0 z-30 flex h-[168px] w-[336px] items-center bg-[#fefefe] pl-[30px]">
    <svg viewBox="100 175 275 220" className="h-[73px] w-[92px] shrink-0">
      <defs>
        <linearGradient id="tower">
          <stop offset="0" stopColor="#173f91" />
          <stop offset=".500" stopColor="#2b62b4" />
          <stop offset="1" stopColor="#173f91" />
        </linearGradient>
      </defs>
      <path d="M237 212l48 26v22l-30 14v74h-18zM165 290l14-8v66l-14-4zM302 262l42 26-42 34z" fill="#d9dadb" />
      <path d="M183 235l49-26v141h-49z" fill="url(#tower)" />
      <path d="M118 302l44-17v60q-32-12-44-43zM258 275l41-18v68l-41 17z" fill="#1b479c" />
      <path d="M119 272Q150 218 215 190 290 166 338 190 382 216 364 264 358 214 318 200 260 182 196 212 148 238 119 272z" fill="#95c11f" />
      <path d="M110 283Q112 340 165 356 222 370 290 332 340 302 370 264 364 310 300 356 236 396 170 391 110 380 105 325 104 300 110 283z" fill="#1b479c" />
    </svg>
    <div className="pt-1.5 whitespace-nowrap text-[#080808] italic">
      <div className="font-['Noto_Sans_CJK_SC',sans-serif] text-4xl leading-9 font-black">土木工程网</div>
      <a href="#civilcn" className="block font-['Noto_Sans',sans-serif] text-[23px] leading-6 font-semibold">www.civilcn.com</a>
    </div>
  </div>
);

const App = () => {
  return (
    <div className="relative flex h-screen min-h-[640px] flex-col overflow-hidden bg-black pt-0.5">
      <TitleBar />
      <MenuBar />
      <Toolbars />
      <div className="flex min-h-0 flex-1 bg-[#5c5c5c]">
        <div className="w-[19px] shrink-0 border-r-2 border-[#484848] pt-[5px] pr-0.5 text-[#dedede]">
          <ToolColumn names={drawTools} className="h-[309px]" />
        </div>
        <div className="flex min-w-0 flex-1 flex-col">
          <div className="flex min-h-0 flex-1">
            <Canvas />
            <div className="flex w-[14px] shrink-0 flex-col items-center bg-[#f0f0f0] pt-1 text-[#333]">
              <Chevron className="w-2 rotate-180" />
              <span className="mt-[229px] h-[14px] w-full bg-[#cdcdcd]" />
            </div>
          </div>
          <div className="flex h-4 shrink-0 items-center bg-[#f0f0f0] pl-0.5 text-[#333]">
            <Chevron className="w-2 rotate-90" />
            <span className="ml-[756px] h-3.5 w-[14px] bg-[#c6c6c6]" />
          </div>
        </div>
        <div className="w-[21px] shrink-0 pt-px pl-0.5 text-[#dedede]">
          <div className="border border-[#474747] pt-1">
            <ToolColumn names={modifyTools} className="h-[279px]" />
            <div className="my-1 h-px bg-[#474747]" />
            <ToolColumn names={["front", "back", "above", "under"]} className="h-[62px]" />
            <div className="mx-0.5 my-0.5 h-px bg-[#ddd]" />
            <ToolColumn names={["textFront", "hatchBack"]} className="h-[31px]" />
          </div>
        </div>
      </div>
      <CommandLine />
      <StatusBar />
      <MiaodongMark />
      <CivilLogo />
    </div>
  );
};

export default App;
